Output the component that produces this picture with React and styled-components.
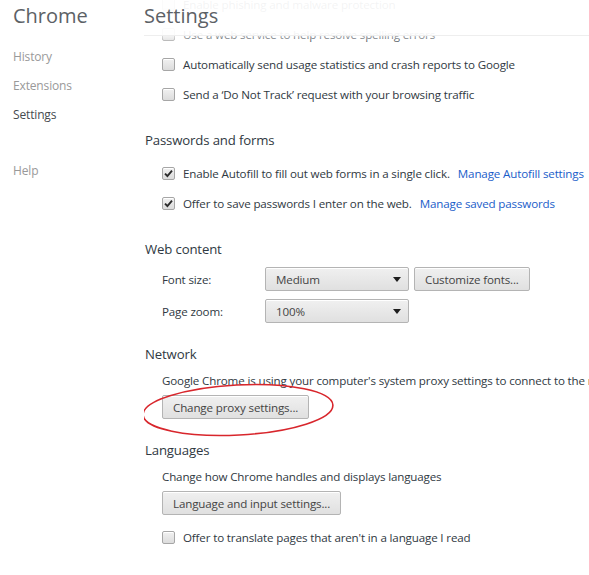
import React from 'react';
import styled, { createGlobalStyle } from 'styled-components';

const GlobalStyle = createGlobalStyle`
  html, body {
    margin: 0;
    padding: 0;
    background: #ffffff;
  }
  body {
    font-family: 'Open Sans', 'Noto Sans', sans-serif;
    font-size: 11.6px;
    letter-spacing: -0.15px;
    color: #303942;
    overflow: hidden;
  }
`;

const Page = styled.div`
  display: flex;
  width: 589px;
  height: 575px;
  overflow: hidden;
`;

const Sidebar = styled.nav`
  width: 144px;
  flex-shrink: 0;
  padding: 4px 0 0 13px;
  box-sizing: border-box;
`;

const Brand = styled.h1`
  margin: 0 0 14px;
  font-size: 20px;
  font-weight: 400;
  letter-spacing: 0;
  line-height: 24px;
  color: #5c6166;
`;

const NavList = styled.ul`
  list-style: none;
  margin: 0;
  padding: 0;
`;

const NavItem = styled.li`
  height: 29px;
  line-height: 29px;
  font-size: 12px;
  color: ${p => (p.$active ? '#464a4f' : '#999999')};
  margin-top: ${p => (p.$spaced ? '27px' : '0')};
`;

const Main = styled.main`
  position: relative;
  flex: 1;
  overflow: hidden;
`;

const Header = styled.header`
  position: absolute;
  top: 0;
  left: 0;
  right: 0;
  height: 35px;
  background: rgba(255, 255, 255, 0.94);
  border-bottom: 1px solid #eeeeee;
  z-index: 2;
  &::after {
    content: '';
    position: absolute;
    left: 0;
    right: 0;
    top: 36px;
    height: 8px;
    background: linear-gradient(rgba(255, 255, 255, 0.55), rgba(255, 255, 255, 0));
  }
`;

const Title = styled.h1`
  margin: 0;
  padding: 4px 0 0 0;
  font-size: 20px;
  font-weight: 400;
  letter-spacing: 0;
  line-height: 24px;
  color: #5c6166;
`;

const Content = styled.div`
  margin-top: -11px;
  white-space: nowrap;
`;

const Section = styled.section`
  & + & {
    margin-top: 21px;
  }
`;

const SectionTitle = styled.h3`
  margin: 0 0 8px 1px;
  height: 20px;
  line-height: 21px;
  font-size: 13.2px;
  font-weight: 400;
  color: #303942;
`;

const CheckRow = styled.label`
  display: flex;
  align-items: center;
  gap: 8px;
  height: 30px;
  padding-left: 18px;
`;

const Box = styled.span`
  width: 13px;
  height: 13px;
  box-sizing: border-box;
  flex-shrink: 0;
  border: 1px solid #a6a6a6;
  border-radius: 2px;
  background: linear-gradient(#f1f1f1, #dcdcdc);
  box-shadow: inset 0 1px 0 #ffffff;
  display: flex;
  align-items: center;
  justify-content: center;
`;

const Link = styled.a`
  color: #1a5dc9;
  text-decoration: none;
  margin-left: 8px;
`;

const FieldRow = styled.div`
  display: flex;
  align-items: center;
  padding-left: 18px;
  height: 24px;
  & + & {
    margin-top: 8px;
  }
`;

const FieldLabel = styled.span`
  width: 103px;
`;

const Select = styled.div`
  display: flex;
  align-items: center;
  justify-content: space-between;
  box-sizing: border-box;
  width: 144px;
  height: 24px;
  padding: 0 7px 0 10px;
  border: 1px solid #b4b4b4;
  border-radius: 2px;
  background: linear-gradient(#f0f0f0, #e0e0e0);
  box-shadow: inset 0 1px 0 #ffffff;
  color: #444444;
`;

const Button = styled.button`
  box-sizing: border-box;
  height: 24px;
  margin-left: ${p => (p.$inline ? '5px' : '0')};
  padding: 0 10px;
  border: 1px solid #b4b4b4;
  border-radius: 2px;
  background: linear-gradient(#f0f0f0, #e0e0e0);
  box-shadow: inset 0 1px 0 #ffffff;
  font-family: inherit;
  font-size: inherit;
  letter-spacing: inherit;
  color: #444444;
`;

const Text = styled.div`
  height: 16px;
  line-height: 18px;
  padding-left: 18px;
`;

const ButtonWrap = styled.div`
  position: relative;
  width: fit-content;
  margin: 7px 0 0 18px;
  & + label {
    margin-top: 7px;
  }
`;

const Annotation = styled.svg`
  position: absolute;
  left: -24px;
  top: -13px;
  width: 200px;
  height: 56px;
  pointer-events: none;
`;

const Check = () => (
  <svg width="9" height="9" viewBox="0 0 9 9">
    <path d="M1 4.6 L3.4 7 L8 1.6" fill="none" stroke="#2b2b2b" strokeWidth="1.9" />
  </svg>
);

const Arrow = () => (
  <svg width="8" height="5" viewBox="0 0 8 5">
    <path d="M0 0 H8 L4 5 Z" fill="#1e1e1e" />
  </svg>
);

const Checkbox = ({ checked, children }) => (
  <CheckRow>
    <Box>{checked && <Check />}</Box>
    <span>{children}</span>
  </CheckRow>
);

const App = () => (
  <Page>
    <GlobalStyle />
    <Sidebar>
      <Brand>Chrome</Brand>
      <NavList>
        <NavItem>History</NavItem>
        <NavItem>Extensions</NavItem>
        <NavItem $active>Settings</NavItem>
        <NavItem $spaced>Help</NavItem>
      </NavList>
    </Sidebar>
    <Main>
      <Header>
        <Title>Settings</Title>
      </Header>
      <Content>
        <Section>
          <Checkbox>Enable phishing and malware protection</Checkbox>
          <Checkbox>Use a web service to help resolve spelling errors</Checkbox>
          <Checkbox>Automatically send usage statistics and crash reports to Google</Checkbox>
          <Checkbox>Send a ‘Do Not Track’ request with your browsing traffic</Checkbox>
        </Section>
        <Section>
          <SectionTitle>Passwords and forms</SectionTitle>
          <Checkbox checked>
            Enable Autofill to fill out web forms in a single click.
            <Link>Manage Autofill settings</Link>
          </Checkbox>
          <Checkbox checked>
            Offer to save passwords I enter on the web.
            <Link>Manage saved passwords</Link>
          </Checkbox>
        </Section>
        <Section>
          <SectionTitle>Web content</SectionTitle>
          <FieldRow>
            <FieldLabel>Font size:</FieldLabel>
            <Select>
              Medium
              <Arrow />
            </Select>
            <Button $inline>Customize fonts...</Button>
          </FieldRow>
          <FieldRow>
            <FieldLabel>Page zoom:</FieldLabel>
            <Select>
              100%
              <Arrow />
            </Select>
          </FieldRow>
        </Section>
        <Section>
          <SectionTitle>Network</SectionTitle>
          <Text>Google Chrome is using your computer's system proxy settings to connect to the network.</Text>
          <ButtonWrap>
            <Button>Change proxy settings...</Button>
            <Annotation viewBox="0 0 200 56">
              <ellipse
                cx="100"
                cy="28"
                rx="95"
                ry="25"
                transform="rotate(-3 100 28)"
                fill="none"
                stroke="#d8262c"
                strokeWidth="1.6"
              />
            </Annotation>
          </ButtonWrap>
        </Section>
        <Section>
          <SectionTitle>Languages</SectionTitle>
          <Text>Change how Chrome handles and displays languages</Text>
          <ButtonWrap>
            <Button>Language and input settings...</Button>
          </ButtonWrap>
          <Checkbox>Offer to translate pages that aren't in a language I read</Checkbox>
        </Section>
      </Content>
    </Main>
  </Page>
);

export default App;
